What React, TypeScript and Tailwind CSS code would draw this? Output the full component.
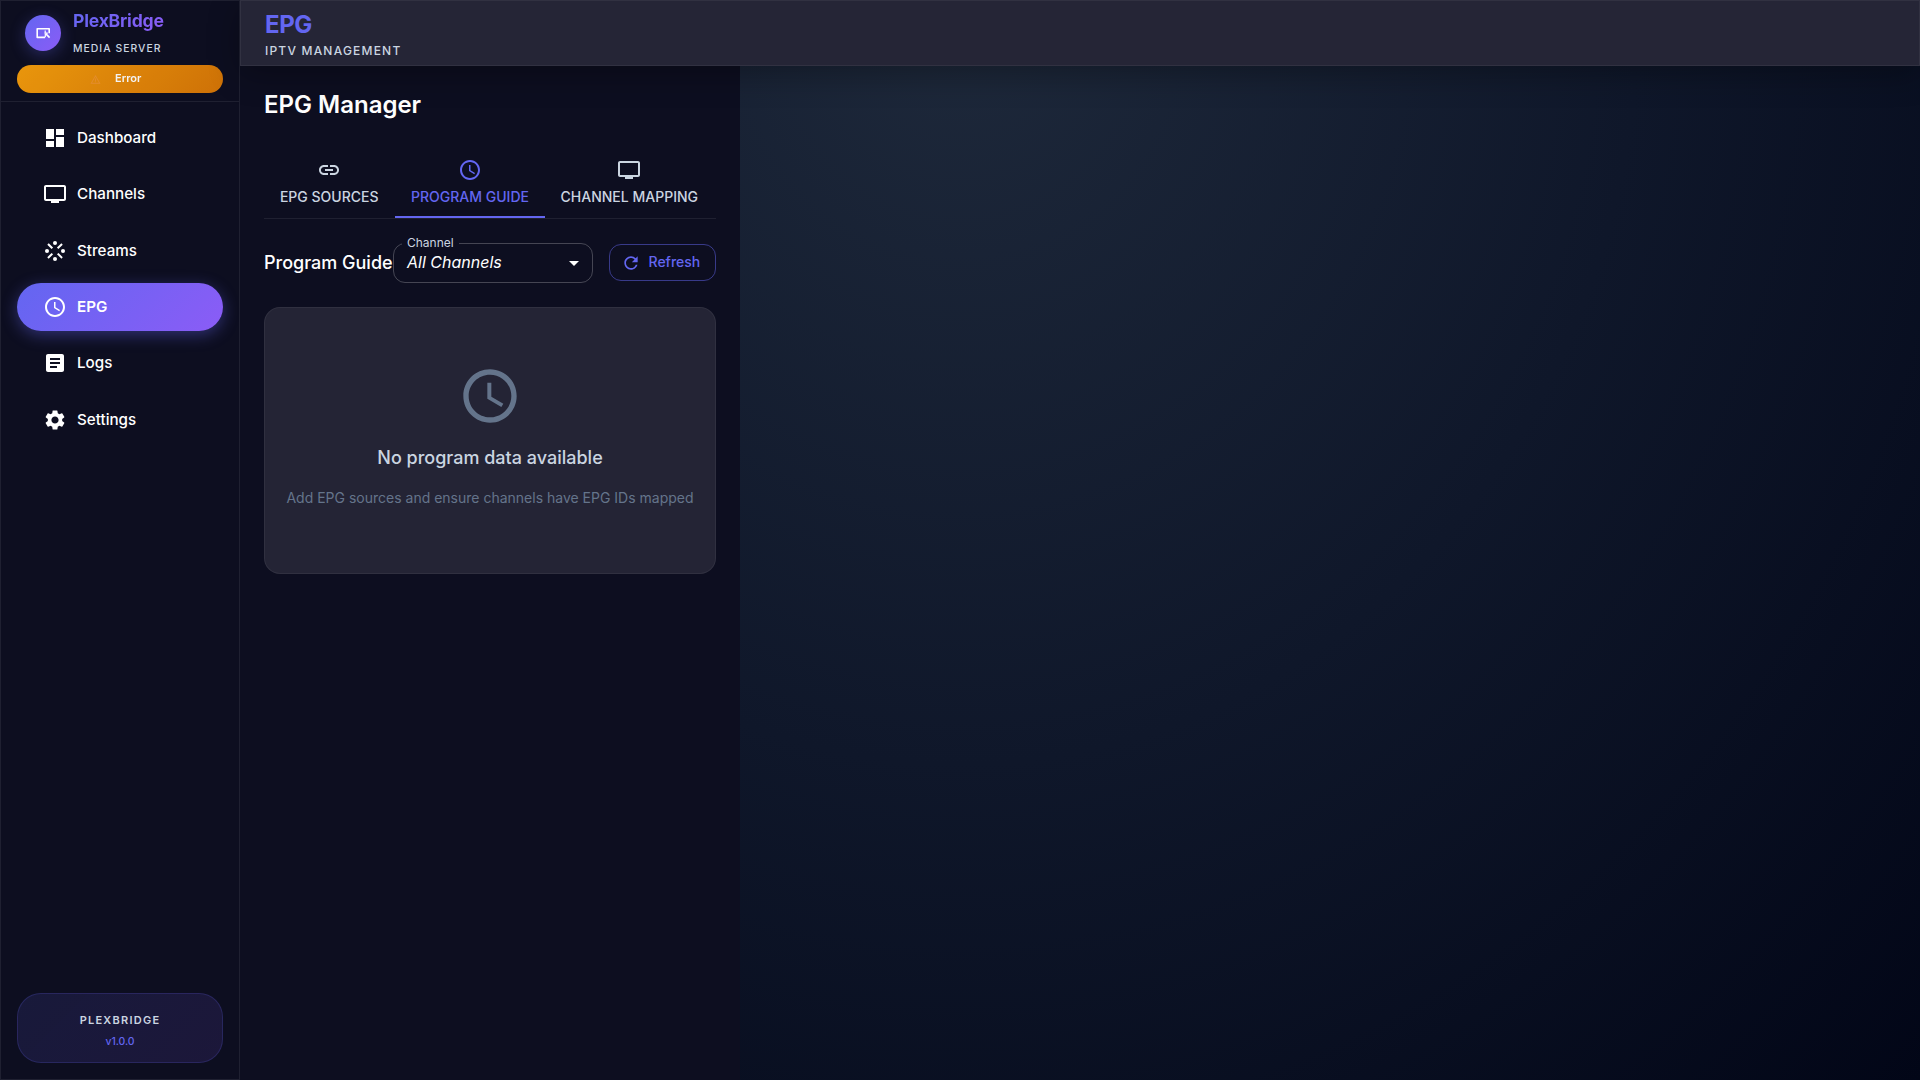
import React from "react";
import { MdDashboard, MdTv, MdStream, MdSchedule, MdArticle, MdSettings, MdLink, MdRefresh, MdArrowDropDown, MdWarningAmber } from "react-icons/md";

const NAV = [
  { label: "Dashboard", Icon: MdDashboard },
  { label: "Channels", Icon: MdTv },
  { label: "Streams", Icon: MdStream },
  { label: "EPG", Icon: MdSchedule, active: true },
  { label: "Logs", Icon: MdArticle },
  { label: "Settings", Icon: MdSettings },
];

function LogoIcon() {
  return (
    <svg width="16" height="16" viewBox="0 0 16 16" fill="none" className="text-white">
      <path d="M10 12.400H2.200V3.800h12v4.400" stroke="currentColor" strokeWidth="1.600" strokeLinejoin="round" />
      <path d="M10.200 5.400v2.800M9.400 8.200h3.400M10.300 9v3.200" stroke="currentColor" strokeWidth="1.200" />
      <path d="M10.600 8.600l4 4" stroke="currentColor" strokeWidth="1.600" />
    </svg>
  );
}

function Sidebar() {
  return (
    <aside className="flex h-full w-60 shrink-0 flex-col border border-white/[0.08] bg-[#0d0e20]">
      <div className="h-[101px] border-b border-white/[0.08] px-4 pt-[9px]">
        <div className="flex h-[50px] items-start px-2">
          <div className="mt-[5px] flex h-9 w-9 items-center justify-center rounded-full bg-linear-[135deg] from-[#6366f1] to-[#8b5cf6] shadow-[0_4px_16px_rgba(99,102,241,0.3)]">
            <LogoIcon />
          </div>
          <div className="ml-3">
            <div className="bg-linear-[135deg] from-[#6366f1] to-[#8b5cf6] bg-clip-text text-[17.6px] leading-[21px] font-bold tracking-[-0.22px] text-transparent">PlexBridge</div>
            <div className="mt-[9px] text-[10.4px] leading-[17px] font-medium tracking-[1.04px] text-[#cbd5e1]">MEDIA SERVER</div>
          </div>
        </div>
        <div className="mt-[5px] flex h-7 items-center rounded-full bg-linear-[135deg] from-[#f59e0b] to-[#d97706] pl-[73px] text-white opacity-95">
          <span className="w-[25px]">
            <MdWarningAmber className="h-[11px] w-[11px] text-[#ef9430]" />
          </span>
          <span className="-mt-px text-[11px] leading-[17px] font-semibold">Error</span>
        </div>
      </div>
      <nav className="flex flex-1 flex-col gap-[8.4px] px-4 pt-[11.8px]">
        {NAV.map(({ label, Icon, active }) => (
          <div
            key={label}
            className={
              active
                ? "flex h-12 items-center rounded-3xl bg-linear-[135deg] from-[#6366f1] to-[#8b5cf6] pl-[26px] text-white shadow-[0_4px_16px_rgba(99,102,241,0.4)]"
                : "flex h-12 items-center rounded-3xl pl-[26px] text-white"
            }
          >
            <Icon className="h-6 w-6" />
            <span className={active ? "ml-[10px] text-[15.2px] leading-6 font-semibold" : "ml-[10px] text-[15.2px] leading-6 font-medium"}>{label}</span>
          </div>
        ))}
      </nav>
      <div className="mx-4 mb-4 flex h-[70px] flex-col items-center rounded-3xl border border-[#6366f1]/20 bg-linear-[135deg] from-[#6366f1]/[0.13] to-[#8b5cf6]/[0.12] pt-[17px]">
        <div className="text-[11px] leading-[19px] font-semibold tracking-[1.25px] text-[#cbd5e1]">PLEXBRIDGE</div>
        <div className="mt-[3px] text-[10.4px] leading-[17px] font-medium text-[#6366f1]">v1.0.0</div>
      </div>
    </aside>
  );
}

function Tab({ Icon, label, active, width }: { Icon: React.ElementType; label: string; active?: boolean; width: string }) {
  return (
    <div className={`flex h-[72px] flex-col items-center pt-3 ${width} ${active ? "border-b-2 border-[#6366f1] text-[#6366f1]" : "text-[#cbd5e1]"}`}>
      <Icon className="h-6 w-6" />
      <span className="mt-[6px] text-[14px] leading-[17.5px] font-medium whitespace-nowrap">{label}</span>
    </div>
  );
}

function Main() {
  return (
    <main className="h-full w-[500px] bg-[#0d0e20] px-6 pt-[23px]">
      <h1 className="text-2xl leading-8 font-semibold text-white">EPG Manager</h1>
      <div className="mt-[25px] flex h-[73px] border-b border-white/[0.08]">
        <Tab Icon={MdLink} label="EPG SOURCES" width="w-[131px] pr-[0.6px]" />
        <Tab Icon={MdSchedule} label="PROGRAM GUIDE" active width="w-[150px]" />
        <Tab Icon={MdTv} label="CHANNEL MAPPING" width="w-[168.6px]" />
      </div>
      <div className="mt-6 flex h-10 items-center">
        <h2 className="-mt-[2px] w-[129px] text-[18px] font-medium whitespace-nowrap text-white">Program Guide</h2>
        <div className="relative flex h-10 w-[200px] items-center rounded-xl border border-white/[0.23] pb-[2px] pl-[13px]">
          <span className="absolute -top-[9px] left-2 bg-[#0d0e20] px-[5px] text-[12px] leading-[15px] text-[#cbd5e1]">Channel</span>
          <span className="text-base text-white italic">All Channels</span>
          <MdArrowDropDown className="absolute top-[7px] right-[6px] h-6 w-6 text-white" />
        </div>
        <button className="-mt-px ml-4 flex h-[37px] w-[107px] items-center rounded-xl border border-[#6366f1]/50 pl-[11px] text-[14px] font-medium text-[#6366f1]">
          <MdRefresh className="h-5 w-5" />
          <span className="-mt-[2px] ml-[7.5px]">Refresh</span>
        </button>
      </div>
      <section className="mt-6 flex h-[267px] flex-col items-center rounded-2xl border border-white/[0.06] bg-[#242435] pt-[56px]">
        <MdSchedule className="h-16 w-16 text-[#64748b]" />
        <h3 className="mt-4 text-[18px] leading-7 font-medium text-[#cbd5e1]">No program data available</h3>
        <p className="mt-4 text-[14px] leading-5 text-[#64748b]">Add EPG sources and ensure channels have EPG IDs mapped</p>
      </section>
    </main>
  );
}

export default function App() {
  return (
    <div className="flex h-screen w-screen overflow-hidden bg-[radial-gradient(ellipse_at_top,#1e293b_0%,#0f172a_50%,#020617_100%)] font-['Inter',sans-serif]">
      <Sidebar />
      <div className="flex min-w-0 flex-1 flex-col">
        <header className="z-10 h-[66px] shrink-0 border border-white/[0.06] bg-[#252536] pt-[9px] pl-6 shadow-[0_8px_32px_rgba(0,0,0,0.3)]">
          <div className="text-2xl leading-[30px] font-bold tracking-[-0.4px] text-[#6366f1]">EPG</div>
          <div className="mt-[1px] text-[12px] leading-5 font-medium tracking-[1.2px] text-[#cbd5e1]">IPTV MANAGEMENT</div>
        </header>
        <div className="min-h-0 flex-1">
          <Main />
        </div>
      </div>
    </div>
  );
}
